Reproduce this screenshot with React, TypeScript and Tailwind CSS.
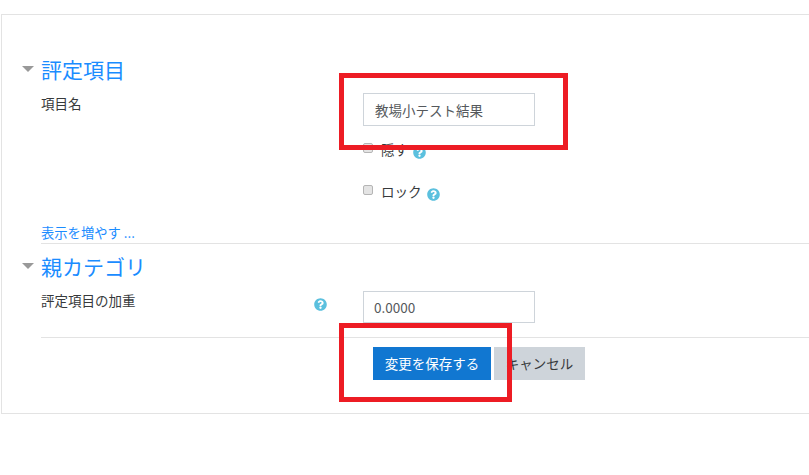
import React from 'react';
import { FaQuestionCircle } from 'react-icons/fa';

const font = { fontFamily: '"Noto Sans CJK JP", "Liberation Sans", sans-serif' };

const Help = ({ className = '' }: { className?: string }) => (
  <FaQuestionCircle size={13} className={`text-[#5bc0de] ${className}`} />
);

const SectionTitle = ({ title }: { title: string }) => (
  <div className="flex h-[26px] items-center">
    <div className="ml-[20px] mr-[7px] h-0 w-0 border-x-[6px] border-t-[6px] border-x-transparent border-t-[#999]" />
    <h3 className="text-[21px] font-normal leading-[26px] text-[#1a8cff] whitespace-nowrap">{title}</h3>
  </div>
);

const Check = ({ label, className = '' }: { label: string; className?: string }) => (
  <label className={`flex h-[20px] items-center ${className}`}>
    <input
      type="checkbox"
      className="mb-[3px] mr-[8px] h-[10px] w-[10px] appearance-none rounded-[2px] border border-[#b5b5b5] bg-[#e4e4e4]"
    />
    <span className="text-[13.5px] leading-[20px] text-[#373a3c]">{label}</span>
    <Help className="ml-[5px] mt-[7px]" />
  </label>
);

const Overlay = ({ className }: { className: string }) => (
  <div className={`pointer-events-none absolute border-[5px] border-[#ed1c24] ${className}`} />
);

export default function App() {
  return (
    <div className="relative h-[475px] w-[809px] overflow-hidden bg-white" style={font}>
      <div className="ml-[1px] mt-[14px] h-[400px] w-[900px] border border-[#e3e3e3] pt-[41px]">
        <SectionTitle title="評定項目" />

        <div className="mt-[9px] flex">
          <div className="ml-[39px] w-[322px] text-[13.5px] leading-[24px] text-[#373a3c]">項目名</div>
          <div className="mt-[2px]">
            <input
              readOnly
              value="教場小テスト結果"
              className="h-[33px] w-[172px] border border-[#ced4da] px-[11px] text-[13.5px] text-[#55595c] outline-none"
            />
            <Check label="隠す" className="mt-[13px]" />
            <Check label="ロック" className="mt-[22px]" />
          </div>
        </div>

        <div className="ml-[39px] mt-[23px] text-[13.3px] leading-[18px] text-[#1a8cff]">表示を増やす ...</div>
        <div className="ml-[39px] mt-[1px] border-t border-[#e3e3e3]" />

        <div className="mt-[9px]">
          <SectionTitle title="親カテゴリ" />
        </div>

        <div className="mt-[12px] flex">
          <div className="ml-[39px] flex w-[322px] text-[13.5px] leading-[18px] text-[#373a3c]">
            <span className="w-[273px]">評定項目の加重</span>
            <Help className="mt-[7px]" />
          </div>
          <input
            readOnly
            value="0.0000"
            className="h-[32px] w-[172px] border border-[#ced4da] px-[10px] text-[13.5px] text-[#55595c] outline-none"
          />
        </div>
        <div className="ml-[39px] mt-[14px] border-t border-[#e3e3e3]" />

        <div className="ml-[371px] mt-[9px] flex gap-[3px]">
          <button className="h-[33px] w-[118px] bg-[#1177d1] text-[13.5px] text-white">変更を保存する</button>
          <button className="h-[33px] w-[91px] bg-[#ced4da] text-[13.5px] text-[#373a3c]">キャンセル</button>
        </div>
      </div>

      <Overlay className="left-[339px] top-[73px] h-[77px] w-[229px]" />
      <Overlay className="left-[339px] top-[323px] h-[79px] w-[173px]" />
    </div>
  );
}
